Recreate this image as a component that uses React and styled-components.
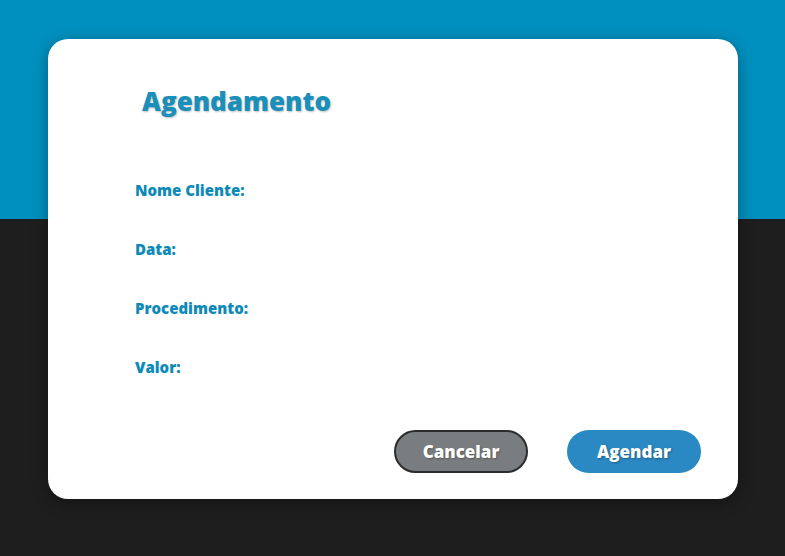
import React from "react";
import styled, { createGlobalStyle } from "styled-components";

const GlobalStyle = createGlobalStyle`
  * { box-sizing: border-box; }
  html, body {
    margin: 0;
    padding: 0;
    width: 785px;
    height: 556px;
    overflow: hidden;
    font-family: "Open Sans", "Liberation Sans", sans-serif;
    background: linear-gradient(to bottom, #0090bf 0, #0090bf 219px, #1e1e1e 219px);
  }
`;

const Page = styled.div`
  padding: 39px 47px 0 48px;
`;

const Modal = styled.div`
  height: 460px;
  background: #ffffff;
  border-radius: 20px;
  box-shadow: 0 4px 16px rgba(0, 0, 0, 0.35);
  padding: 44px 37px 0 87px;
  display: flex;
  flex-direction: column;
`;

const Title = styled.h1`
  margin: 0 0 0 7px;
  font-size: 26px;
  line-height: 36px;
  font-weight: 800;
  color: #1a8fba;
  text-shadow: 1px 1px 2px rgba(0, 0, 0, 0.25);
`;

const Fields = styled.div`
  display: flex;
  flex-direction: column;
  gap: 39px;
  margin-top: 61px;
`;

const Label = styled.label`
  font-size: 15px;
  line-height: 20px;
  font-weight: 800;
  color: #0e8ab8;
`;

const Actions = styled.div`
  display: flex;
  justify-content: flex-end;
  gap: 39px;
  margin-top: 53px;
`;

const Button = styled.button`
  width: 134px;
  height: 43px;
  border-radius: 22px;
  border: ${({ $variant }) => ($variant === "cancel" ? "2px solid #2c2c2c" : "none")};
  background: ${({ $variant }) => ($variant === "cancel" ? "#7a7d80" : "#2a88c2")};
  color: #ffffff;
  font-family: inherit;
  font-size: 17px;
  font-weight: 800;
  text-shadow: 1px 1px 2px rgba(0, 0, 0, 0.3);
  cursor: pointer;
`;

export default function App() {
  return (
    <>
      <GlobalStyle />
      <Page>
        <Modal>
          <Title>Agendamento</Title>
          <Fields>
            <Label>Nome Cliente:</Label>
            <Label>Data:</Label>
            <Label>Procedimento:</Label>
            <Label>Valor:</Label>
          </Fields>
          <Actions>
            <Button $variant="cancel">Cancelar</Button>
            <Button>Agendar</Button>
          </Actions>
        </Modal>
      </Page>
    </>
  );
}
